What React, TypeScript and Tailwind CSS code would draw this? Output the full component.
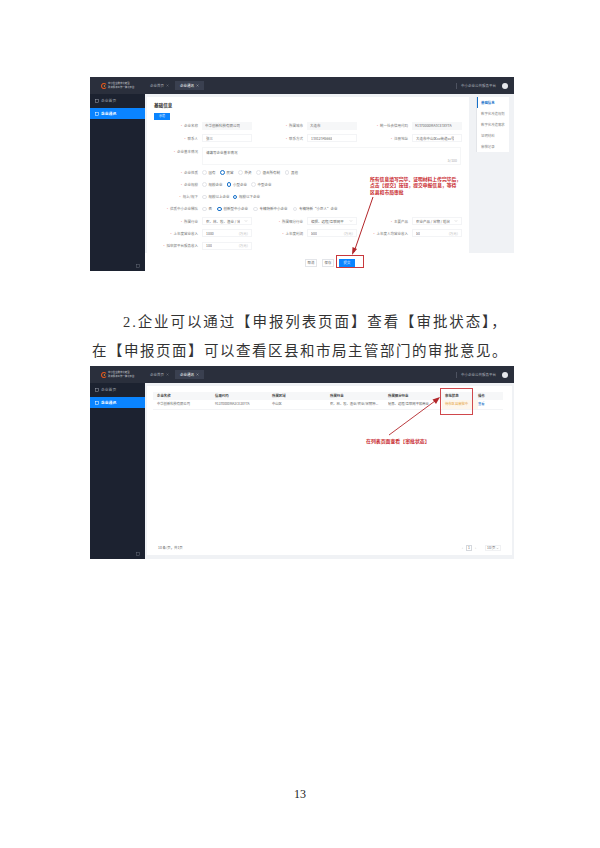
import * as React from "react";
import { ChevronDown, X } from "lucide-react";

const cjk = { fontFamily: '"Noto Sans CJK SC", sans-serif' };

const SmallBox = ({ color }: { color: string }) => {
	return (
		<svg width="4" height="4" viewBox="0 0 8 8" className="shrink-0">
			<rect x="1" y="1" width="6" height="6" fill="none" stroke={color} strokeWidth="1" />
		</svg>
	);
};

const Frame = ({ children, tall }: { children: React.ReactNode; tall?: boolean }) => {
	return (
		<div className={`relative flex w-[424px] flex-col overflow-hidden bg-[#f0f2f5] ${tall ? "h-[194px]" : "h-[193px]"}`}>
			<div className="flex h-[17px] shrink-0 items-center bg-[#2a2f3c] text-[3.5px] text-[#aeb2bb]">
				<svg width="6" height="6" viewBox="0 0 12 12" className="ml-[11px] shrink-0">
					<path d="M10 3 A5 5 0 1 0 10 9" fill="none" stroke="#d9531e" strokeWidth="2.4" />
					<circle cx="7" cy="6" r="1.5" fill="#e9a33b" />
				</svg>
				<div className="ml-[1px] w-[31px] text-[2.4px] leading-[3.2px] whitespace-nowrap text-[#d5d7dc]">
					<div>中小企业数字化转型</div>
					<div>政务服务工作一体化平台</div>
				</div>
				<div className="ml-[11px] flex w-[22px] items-center gap-[2px]">
					<span>企业首页</span>
					<X size={3} />
				</div>
				<div className="ml-[3px] flex h-[9px] w-[29px] items-center justify-center gap-[2px] bg-[#3a4050] text-white">
					<span>企业通讯</span>
					<X size={3} />
				</div>
				<div className="ml-auto flex items-center">
					<svg width="1" height="6" className="shrink-0">
						<rect width="0.5" height="6" fill="#707684" />
					</svg>
					<span className="ml-[4px]">中小企业公共服务平台</span>
					<div className="mr-[6px] ml-[6px] h-[6px] w-[6px] rounded-full bg-[#e6e8ec]" />
				</div>
			</div>
			<div className="flex min-h-0 flex-1">
				<div className="flex w-[55px] shrink-0 flex-col bg-[#1c2230] pt-[1px] text-[3.8px]">
					<div className="flex h-[12px] items-center gap-[2px] pl-[5px] text-[#9da2ad]">
						<SmallBox color="#9da2ad" />
						<span>企业首页</span>
					</div>
					<div className="mt-[1px] flex h-[11px] items-center gap-[2px] bg-[#0a84ff] pl-[5px] font-bold text-white">
						<SmallBox color="#ffffff" />
						<span>企业通讯</span>
					</div>
					<div className="mt-auto mr-[5px] mb-[3px] ml-auto">
						<SmallBox color="#666c79" />
					</div>
				</div>
				{children}
			</div>
		</div>
	);
};

const Label = ({ text }: { text: string }) => {
	return (
		<div className="w-[55px] shrink-0 pr-[4px] text-right text-[3.5px] whitespace-nowrap text-[#777]">
			<span className="text-[#e88]">· </span>
			{text}
		</div>
	);
};

const Field = ({ label, value, unit, select, gray }: { label: string; value: string; unit?: string; select?: boolean; gray?: boolean }) => {
	return (
		<div className="flex w-[105px] items-center">
			<Label text={label} />
			<div
				className={`flex h-[8px] w-[50px] items-center justify-between px-[3px] text-[3.5px] text-[#666] ${gray ? "bg-[#f6f7f8]" : "border border-[#f3f4f6] bg-white"}`}
			>
				<span className="truncate">{value}</span>
				{unit && <span className="text-[#bbb]">{unit}</span>}
				{select && <ChevronDown size={4} className="shrink-0 text-[#aaa]" />}
			</div>
		</div>
	);
};

const Radio = ({ text, on }: { text: string; on?: boolean }) => {
	return (
		<div className="flex items-center gap-[2px] text-[3.5px] whitespace-nowrap text-[#666]">
			<div
				className={`h-[4.5px] w-[4.5px] rounded-full ${on ? "border-[1.4px] border-[#1570c9] bg-white" : "border border-[#e3e5e9]"}`}
			/>
			<span>{text}</span>
		</div>
	);
};

const RadioRow = ({ label, items, on, gap }: { label: string; items: string[]; on: number; gap: string }) => {
	return (
		<div className="flex h-[12.2px] items-center">
			<Label text={label} />
			<div className={`flex items-center ${gap}`}>
				{items.map((item, i) => (
					<Radio key={item} text={item} on={i === on} />
				))}
			</div>
		</div>
	);
};

const Row = ({ children }: { children: React.ReactNode }) => {
	return <div className="flex h-[12.2px] items-center">{children}</div>;
};

const FormScreen = () => {
	return (
		<Frame tall>
			<div className="flex min-w-0 flex-1 flex-col">
				<div className="flex min-h-0 flex-1 pt-[3px] pl-[2px]">
					<div className="w-[322px] shrink-0 overflow-hidden bg-white">
						<div className="pt-[4px] pl-[7px] text-[4.6px] leading-[8px] font-bold text-[#333]">基础信息</div>
						<div className="mt-[4px] ml-[7px] flex h-[7px] w-[16px] items-center justify-center bg-[#0a84ff] text-[3px] text-white">
							示范
						</div>
						<Row>
							<Field label="企业名称" value="中华创新科技有限公司" gray />
							<Field label="所属城市" value="大连市" gray />
							<Field label="统一社会信用代码" value="91370000MA3CE3XY7A" gray />
						</Row>
						<Row>
							<Field label="联系人" value="张三" />
							<Field label="联系方式" value="13812345665" />
							<Field label="注册地址" value="大连市中山区xx街道xx号" />
						</Row>
						<div className="mt-[3px] flex">
							<div className="pt-[2px]">
								<Label text="企业基本情况" />
							</div>
							<div className="relative h-[18px] w-[259px] border border-[#f5f6f7] px-[3px] pt-[2px] text-[3.5px] text-[#666]">
								请填写企业基本情况
								<span className="absolute right-[3px] bottom-[1px] text-[#aaa]">5/100</span>
							</div>
						</div>
						<div className="h-[1px]" />
						<RadioRow label="企业性质" items={["国有", "民营", "外资", "混合所有制", "其他"]} on={1} gap="gap-[4.5px]" />
						<RadioRow label="企业规模" items={["规模企业", "小型企业", "中型企业"]} on={1} gap="gap-[4px]" />
						<RadioRow label="规上/规下" items={["规模以上企业", "规模以下企业"]} on={1} gap="gap-[3px]" />
						<RadioRow
							label="优质中小企业梯队"
							items={["否", "创新型中小企业", "专精特新中小企业", "专精特新“小巨人”企业"]}
							on={1}
							gap="gap-[5px]"
						/>
						<Row>
							<Field label="所属行业" value="农、林、牧、渔业 / 谷" select />
							<Field label="所属细分行业" value="编撰、远程/互联网平" select />
							<Field label="主要产品" value="农业产品 / 谷物 / 稻谷" select />
						</Row>
						<Row>
							<Field label="上年度营业收入" value="1000" unit="(万元)" />
							<Field label="上年度利润" value="500" unit="(万元)" />
							<Field label="上年度人均营业收入" value="50" unit="(万元)" />
						</Row>
						<Row>
							<Field label="拟申报平台服务收入" value="100" unit="(万元)" />
						</Row>
					</div>
					<div className="ml-[7px] h-[55px] w-[33px] border-l border-[#e3e5e9] bg-white text-[3.4px] text-[#888]">
						<div className="flex h-[11px] items-center border-l border-[#1570c9] pl-[3px] font-bold text-[#1570c9]">基础信息</div>
						<div className="flex h-[11px] items-center pl-[4px] whitespace-nowrap">数字化改造规划</div>
						<div className="flex h-[11px] items-center pl-[4px] whitespace-nowrap">数字化改造需求</div>
						<div className="flex h-[11px] items-center pl-[4px]">证明材料</div>
						<div className="flex h-[11px] items-center pl-[4px]">审核记录</div>
					</div>
				</div>
				<div className="flex h-[18px] shrink-0 items-center bg-white pt-[1px] pl-[160px] text-[3.4px]">
					<div className="flex h-[8px] w-[12px] items-center justify-center border border-[#e3e5e9] text-[#666]">取消</div>
					<div className="ml-[5px] flex h-[8px] w-[12px] items-center justify-center border border-[#e3e5e9] text-[#666]">保存</div>
					<div className="ml-[5px] flex h-[8px] w-[16px] items-center justify-center bg-[#0a84ff] text-white">提交</div>
				</div>
			</div>
			<div className="absolute top-[178px] left-[246px] h-[13px] w-[28px] border-[1.5px] border-[#c8383c]" />
			<div className="absolute top-[99px] left-[280px] text-[4.8px] leading-[6.4px] font-bold whitespace-nowrap text-[#c8282c]">
				<div>所有信息填写完毕、证明材料上传完毕后，</div>
				<div>点击【提交】按钮，提交申报信息，等待</div>
				<div>区县和市局审批</div>
			</div>
			<svg className="absolute top-[118px] left-[258px]" width="30" height="62" viewBox="0 0 30 62">
				<path d="M25 2 L6 57" stroke="#b3262a" strokeWidth="1" fill="none" />
				<path d="M4 60 L4.5 52 L9 54 Z" fill="#b3262a" />
			</svg>
		</Frame>
	);
};

const cols = "grid grid-cols-[58px_57px_58px_58px_57px_33px_25px]";

const ListScreen = () => {
	return (
		<Frame>
			<div className="flex min-w-0 flex-1 flex-col pt-[3px]">
				<div className="ml-[2px] flex min-h-0 w-[365px] flex-1 flex-col bg-white pt-[6px] pl-[6px]">
					<div className={`${cols} h-[8px] w-[350px] items-center bg-[#f6f7f8] pl-[4px] text-[3.4px] font-bold text-[#444]`}>
						<span>企业名称</span>
						<span>信用代码</span>
						<span>所属区域</span>
						<span>所属行业</span>
						<span>所属细分行业</span>
						<span>审批状态</span>
						<span>操作</span>
					</div>
					<div className={`${cols} h-[10px] w-[350px] items-center border-b border-[#f3f4f6] pl-[4px] text-[3.3px] text-[#666]`}>
						<span>中华创新科技有限公司</span>
						<span>91370000MA3CE3XY7A</span>
						<span>中山区</span>
						<span className="truncate pr-[2px]">农、林、牧、渔业/农业/谷物种...</span>
						<span className="truncate pr-[2px]">秘界、远程/互联网平和商业</span>
						<div className="-ml-[3px] flex h-full items-center bg-[#fdf6ec] pl-[3px] whitespace-nowrap text-[#e6a23c]">待市区县审批中</div>
						<span className="text-[#1570c9]">查看</span>
					</div>
					<div className="mt-auto mb-[4px] flex items-center pr-[11px] pl-[5px] text-[3.4px] text-[#666]">
						<span>10 条/页，共1页</span>
						<div className="ml-auto flex items-center gap-[3px] text-[#aaa]">
							<span>‹</span>
							<div className="flex h-[6px] w-[6px] items-center justify-center border border-[#d5d8dd] text-[#666]">1</div>
							<span>›</span>
						</div>
						<div className="ml-[9px] flex h-[6px] w-[16px] items-center justify-between border border-[#f0f1f3] px-[1px]">
							<span>10/页</span>
							<ChevronDown size={3} />
						</div>
					</div>
				</div>
				<div className="h-[4px] shrink-0" />
			</div>
			<div className="absolute top-[22px] left-[350px] h-[27px] w-[33px] border-[1.5px] border-[#d0484c]" />
			<svg className="absolute top-[30px] left-[298px]" width="54" height="40" viewBox="0 0 54 40">
				<path d="M1 39 L47 5" stroke="#b3262a" strokeWidth="0.9" fill="none" />
				<path d="M52 1 L44.5 3.5 L48 8 Z" fill="#b3262a" />
			</svg>
			<div className="absolute top-[71px] left-[276px] text-[4.9px] leading-[7px] font-bold whitespace-nowrap text-[#c8282c]">
				在列表页面查看【审批状态】
			</div>
		</Frame>
	);
};

export default function App() {
	return (
		<div className="flex h-[848px] w-[600px] flex-col bg-white pt-[77px] pl-[90px]" style={cjk}>
			<FormScreen />
			<div className="mt-[35px] mb-[2px] w-[424px] text-[14.5px] text-[#333]">
				<p className="h-[29px] pl-[33px] leading-[29px] tracking-[1.9px] whitespace-nowrap">
					<span style={{ fontFamily: '"Liberation Serif", serif' }}>2.</span>企业可以通过【申报列表页面】查看【审批状态】，
				</p>
				<p className="h-[29px] pl-[2px] leading-[29px] tracking-[1.5px] whitespace-nowrap">在【申报页面】可以查看区县和市局主管部门的审批意见。</p>
			</div>
			<ListScreen />
			<div className="mt-[228px] w-[420px] text-center text-[12px] leading-[14px] text-[#222]" style={{ fontFamily: '"Liberation Serif", serif' }}>
				13
			</div>
		</div>
	);
}
